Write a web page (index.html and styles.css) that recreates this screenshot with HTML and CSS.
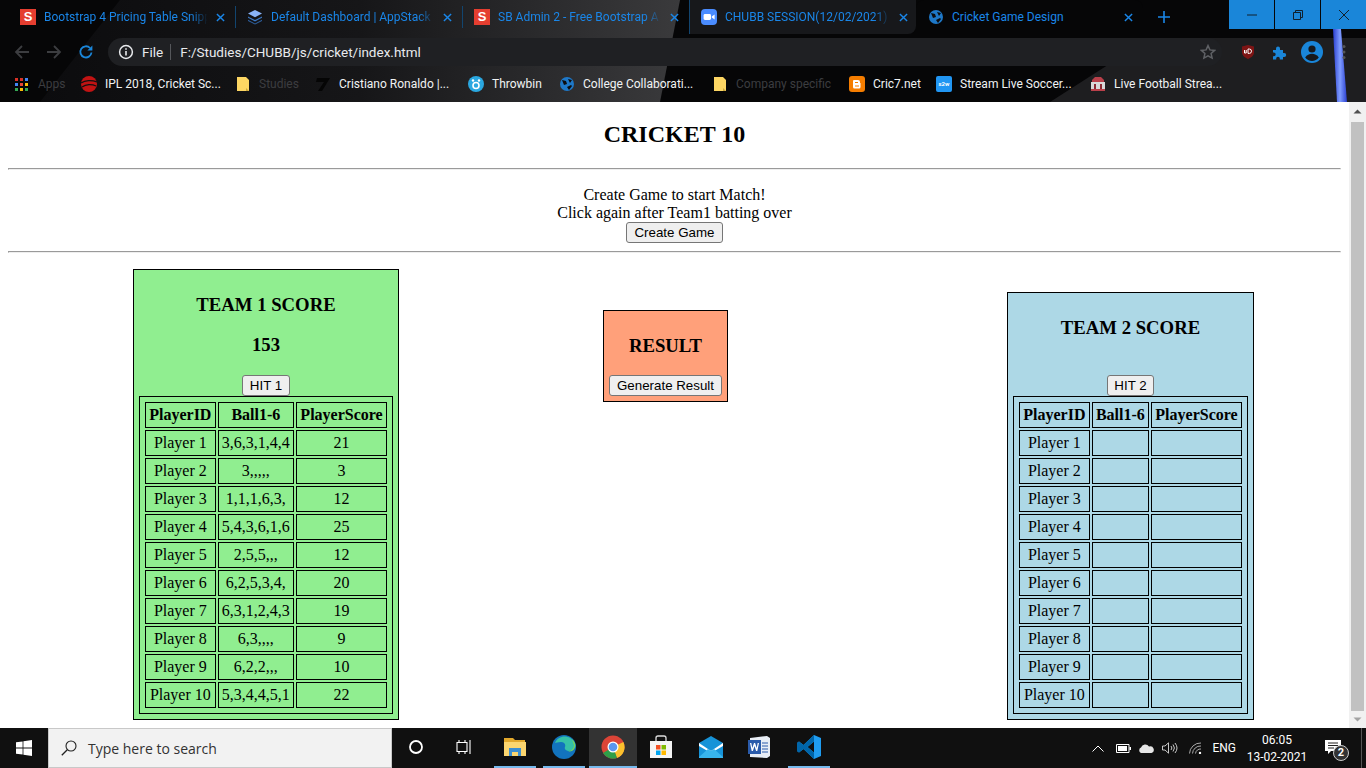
FILE: index.html
```html
<!DOCTYPE html>
<html lang="en">
<head>
    <meta charset="UTF-8">
    <meta name="viewport" content="width=device-width, initial-scale=1.0">
    <title>Cricket Game Design</title>
    <link rel="stylesheet" href="styles.css">
</head>
<body>
    <div class="browser">
        <!-- theme picture behind the tabs -->
        <svg class="theme" viewBox="0 0 1366 102" preserveAspectRatio="none">
            <defs>
                <linearGradient id="sheen" x1="0" x2="1" y1="0" y2="0">
                    <stop offset="0" stop-color="#0c0c0e"/>
                    <stop offset="0.5" stop-color="#161618"/>
                    <stop offset="1" stop-color="#3a3a3c"/>
                </linearGradient>
                <linearGradient id="streak" x1="0" x2="1" y1="0" y2="0">
                    <stop offset="0" stop-color="#2a3fd0"/>
                    <stop offset="0.5" stop-color="#7f9cff"/>
                    <stop offset="1" stop-color="#2a3fd0"/>
                </linearGradient>
            </defs>
            <polygon points="120,0 680,0 660,102 40,102" fill="url(#sheen)"/>
            <polygon points="1050,102 1150,38 1366,38 1366,102" fill="#1e1e20"/>
            <polygon points="1333,29 1341,29 1347,102 1337,102" fill="url(#streak)"/>
        </svg>

        <div class="tabstrip">
            <div class="tab">
                <span class="favicon fav-s">S</span>
                <span class="tab-title">Bootstrap 4 Pricing Table Snipp</span>
                <svg class="tab-close" viewBox="0 0 10 10"><path d="M1 1l8 8M9 1l-8 8"/></svg>
            </div>
            <div class="tab tab-line">
                <svg class="favicon" viewBox="0 0 16 16"><path d="M8 1l7 3.6-7 3.6-7-3.6z" fill="#8ab4f8"/><path d="M1 7.4l7 3.6 7-3.6v1.4l-7 3.6-7-3.6z" fill="#3b78c4"/><path d="M1 10.8l7 3.6 7-3.6v1.2L8 15.6 1 12z" fill="#2d5f9e"/></svg>
                <span class="tab-title">Default Dashboard | AppStack</span>
                <svg class="tab-close" viewBox="0 0 10 10"><path d="M1 1l8 8M9 1l-8 8"/></svg>
            </div>
            <div class="tab tab-line">
                <span class="favicon fav-s">S</span>
                <span class="tab-title">SB Admin 2 - Free Bootstrap A</span>
                <svg class="tab-close" viewBox="0 0 10 10"><path d="M1 1l8 8M9 1l-8 8"/></svg>
            </div>
            <div class="tab tab-line tab-hover">
                <svg class="favicon" viewBox="0 0 16 16"><rect width="16" height="16" rx="4" fill="#4a8cff"/><rect x="2.6" y="5" width="7.4" height="6" rx="1.4" fill="#fff"/><path d="M10.8 7.4l2.8-2v5.2l-2.8-2z" fill="#fff"/></svg>
                <span class="tab-title">CHUBB SESSION(12/02/2021) -</span>
                <svg class="tab-close" viewBox="0 0 10 10"><path d="M1 1l8 8M9 1l-8 8"/></svg>
            </div>
            <div class="tab tab-active">
                <svg class="favicon" viewBox="0 0 16 16"><circle cx="8" cy="8" r="7" fill="#1e78c8"/><path d="M3 4l4 1 1 3-3 1zM9 3l4 1-2 3zM8 11l4-2 1 1-3 4z" fill="#0c0c0e"/></svg>
                <span class="tab-title">Cricket Game Design</span>
                <svg class="tab-close" viewBox="0 0 10 10"><path d="M1 1l8 8M9 1l-8 8"/></svg>
            </div>
            <svg class="new-tab" viewBox="0 0 12 12"><path d="M6 0v12M0 6h12"/></svg>
            <div class="window-btns">
                <div class="window-btn"><svg viewBox="0 0 10 10"><path d="M0 5h10"/></svg></div>
                <div class="window-btn"><svg viewBox="0 0 10 10"><path d="M.5 2.5h7v7h-7zM2.5 2.5v-2h7v7h-2"/></svg></div>
                <div class="window-btn"><svg viewBox="0 0 10 10"><path d="M0 0l10 10M10 0L0 10"/></svg></div>
            </div>
        </div>

        <div class="toolbar">
            <svg class="nav-icon" viewBox="0 0 16 16"><path d="M15 8H2M8 2L2 8l6 6" stroke="#3c3d40"/></svg>
            <svg class="nav-icon" viewBox="0 0 16 16"><path d="M1 8h13M8 2l6 6-6 6" stroke="#3c3d40"/></svg>
            <svg class="nav-icon" viewBox="0 0 16 16"><path d="M13.5 8.5A5.6 5.6 0 1 1 12 4" stroke="#1a86d9"/><path d="M14.4 1.6v5h-5z" fill="#1a86d9"/></svg>
            <div class="omnibox">
                <svg class="info-icon" viewBox="0 0 16 16"><circle cx="8" cy="8" r="6.4" fill="none" stroke="#e8eaed" stroke-width="1.5"/><path d="M7.2 7h1.6v4.6H7.2zM7.2 4.2h1.6v1.6H7.2z" fill="#e8eaed"/></svg>
                <span class="scheme">File</span>
                <span class="url">F:/Studies/CHUBB/js/cricket/index.html</span>
                <svg class="star" viewBox="0 0 16 16"><path d="M8 1.6l1.9 4.3 4.7.5-3.5 3.100 1 4.600L8 11.800l-4.100 2.300 1-4.600L1.400 6.400l4.700-.5z"/></svg>
            </div>
            <div class="ext-icons">
                <svg viewBox="0 0 16 16"><path d="M8 1l6 1.600v6c0 3-3 5.200-6 6.400-3-1.200-6-3.400-6-6.400v-6z" fill="#7d1414"/><path d="M4.500 6v3h1.700V6M8 5v4.400h1.300a2.200 2.200 0 0 0 0-4.400z" fill="none" stroke="#fff" stroke-width="1"/></svg>
                <svg viewBox="0 0 16 16"><path d="M1 6h3V4.500a2 2 0 0 1 4 0V6h3v3h1.200a2 2 0 0 1 0 4H11v2.500H7.800v-1a1.800 1.800 0 0 0-3.600 0v1H1v-3.300h.8a1.900 1.900 0 0 0 0-3.800H1z" fill="#1a86d9"/></svg>
                <svg class="avatar" viewBox="0 0 22 22"><circle cx="11" cy="11" r="11" fill="#1a86d9"/><circle cx="11" cy="8" r="3.600" fill="#17191c"/><path d="M4.200 16.500c1.500-2.600 4.300-3.700 6.800-3.700s5.300 1.100 6.800 3.700A8.800 8.800 0 0 1 11 20a8.800 8.800 0 0 1-6.800-3.500z" fill="#17191c"/></svg>
                <svg class="dots" viewBox="0 0 4 16"><circle cx="2" cy="2.500" r="1.500"/><circle cx="2" cy="8" r="1.500"/><circle cx="2" cy="13.500" r="1.500"/></svg>
            </div>
        </div>

        <div class="bookmarks">
            <div class="bookmark bm-apps">
                <svg viewBox="0 0 13 13"><g fill="#d93025"><rect width="3" height="3"/><rect x="5" width="3" height="3"/></g><rect x="10" width="3" height="3" fill="#4285f4"/><rect y="5" width="3" height="3" fill="#4285f4"/><rect x="5" y="5" width="3" height="3" fill="#ea4335"/><rect x="10" y="5" width="3" height="3" fill="#fbbc04"/><rect y="10" width="3" height="3" fill="#34a853"/><rect x="5" y="10" width="3" height="3" fill="#fbbc04"/><rect x="10" y="10" width="3" height="3" fill="#34a853"/></svg>
                <span class="dim">Apps</span>
            </div>
            <div class="bookmark bm-ipl">
                <svg viewBox="0 0 16 16"><circle cx="8" cy="8" r="8" fill="#c21313"/><path d="M0 7c4-3 11-3 16-1M1 11c4-3 10-3 14-1" stroke="#111" stroke-width="1.300" fill="none"/></svg>
                <span>IPL 2018, Cricket Sc...</span>
            </div>
            <div class="bookmark bm-folder bm-studies">
                <svg viewBox="0 0 12 14"><path d="M0 0h9l3 3v11H0z" fill="#fdd663"/><path d="M9 11v3h3z" fill="#c9a63c"/></svg>
                <span class="dim">Studies</span>
            </div>
            <div class="bookmark bm-seven">
                <svg viewBox="0 0 16 16"><path d="M2 2h13L7 15H3l6-9H1z" fill="#050505"/></svg>
                <span>Cristiano Ronaldo |...</span>
            </div>
            <div class="bookmark bm-throw">
                <svg viewBox="0 0 16 16"><circle cx="8" cy="8" r="8" fill="#2aa7e0"/><circle cx="8" cy="9.500" r="3" fill="none" stroke="#fff" stroke-width="1.600"/><circle cx="5" cy="4.500" r="1.200" fill="#fff"/><circle cx="11" cy="4.500" r="1.200" fill="#fff"/></svg>
                <span>Throwbin</span>
            </div>
            <div class="bookmark bm-college">
                <svg viewBox="0 0 16 16"><circle cx="8" cy="8" r="7" fill="#1e78c8"/><path d="M3 4l4 1 1 3-3 1zM9 3l4 1-2 3zM8 11l4-2 1 1-3 4z" fill="#0c0c0e"/></svg>
                <span>College Collaborati...</span>
            </div>
            <div class="bookmark bm-folder bm-company">
                <svg viewBox="0 0 12 14"><path d="M0 0h9l3 3v11H0z" fill="#fdd663"/><path d="M9 11v3h3z" fill="#c9a63c"/></svg>
                <span class="dim">Company specific</span>
            </div>
            <div class="bookmark bm-blogger">
                <svg viewBox="0 0 16 16"><rect width="16" height="16" rx="3" fill="#f57d00"/><path d="M5 4h4a2 2 0 0 1 2 2v1h.5v4a1.500 1.500 0 0 1-1.500 1.500H5.500A1.500 1.500 0 0 1 4 11V5a1 1 0 0 1 1-1z" fill="#fff"/><path d="M6 6.500h3M6 10h4" stroke="#f57d00" stroke-width="1.200"/></svg>
                <span>Cric7.net</span>
            </div>
            <div class="bookmark bm-s2w">
                <span class="fav-s2w">s2w</span>
                <span>Stream Live Soccer...</span>
            </div>
            <div class="bookmark bm-stadium">
                <svg viewBox="0 0 16 16"><path d="M2 4l3-3h6l3 3v2H2z" fill="#b9404a"/><rect x="1" y="6" width="14" height="7" fill="#d8d8d8"/><path d="M4 8h2v5H4zM10 8h2v5h-2z" fill="#8a2a33"/><rect x="1" y="13" width="14" height="2" fill="#b9404a"/></svg>
                <span>Live Football Strea...</span>
            </div>
        </div>

        <div class="viewport">
            <div class="page">
                <h2 class="title">CRICKET 10</h2>
                <hr>
                <div class="intro">
                    Create Game to start Match!<br>
                    Click again after Team1 batting over<br>
                    <button>Create Game</button>
                </div>
                <hr>
                <div class="board">
                    <div class="box team1">
                        <h3>TEAM 1 SCORE</h3>
                        <h3>153</h3>
                        <button>HIT 1</button>
                        <table>
                            <tr><th>PlayerID</th><th>Ball1-6</th><th>PlayerScore</th></tr>
                            <tr><td>Player 1</td><td>3,6,3,1,4,4</td><td>21</td></tr>
                            <tr><td>Player 2</td><td>3,,,,,</td><td>3</td></tr>
                            <tr><td>Player 3</td><td>1,1,1,6,3,</td><td>12</td></tr>
                            <tr><td>Player 4</td><td>5,4,3,6,1,6</td><td>25</td></tr>
                            <tr><td>Player 5</td><td>2,5,5,,,</td><td>12</td></tr>
                            <tr><td>Player 6</td><td>6,2,5,3,4,</td><td>20</td></tr>
                            <tr><td>Player 7</td><td>6,3,1,2,4,3</td><td>19</td></tr>
                            <tr><td>Player 8</td><td>6,3,,,,</td><td>9</td></tr>
                            <tr><td>Player 9</td><td>6,2,2,,,</td><td>10</td></tr>
                            <tr><td>Player 10</td><td>5,3,4,4,5,1</td><td>22</td></tr>
                        </table>
                    </div>
                    <div class="box result">
                        <h3>RESULT</h3>
                        <button>Generate Result</button>
                    </div>
                    <div class="box team2">
                        <h3>TEAM 2 SCORE</h3>
                        <br>
                        <button>HIT 2</button>
                        <table>
                            <tr><th>PlayerID</th><th>Ball1-6</th><th>PlayerScore</th></tr>
                            <tr><td>Player 1</td><td></td><td></td></tr>
                            <tr><td>Player 2</td><td></td><td></td></tr>
                            <tr><td>Player 3</td><td></td><td></td></tr>
                            <tr><td>Player 4</td><td></td><td></td></tr>
                            <tr><td>Player 5</td><td></td><td></td></tr>
                            <tr><td>Player 6</td><td></td><td></td></tr>
                            <tr><td>Player 7</td><td></td><td></td></tr>
                            <tr><td>Player 8</td><td></td><td></td></tr>
                            <tr><td>Player 9</td><td></td><td></td></tr>
                            <tr><td>Player 10</td><td></td><td></td></tr>
                        </table>
                    </div>
                </div>
            </div>
            <div class="scrollbar">
                <svg viewBox="0 0 17 17"><path d="M8.500 7.500l4 4h-8z" fill="#505050"/></svg>
                <div class="scroll-track"><div class="scroll-thumb"></div></div>
                <svg viewBox="0 0 17 17"><path d="M8.500 10.500l4-4h-8z" fill="#a3a3a3"/></svg>
            </div>
        </div>

        <div class="taskbar">
            <svg class="win-logo" viewBox="0 0 16 16"><path d="M0 2.300l6.600-.9v6.200H0zM7.400 1.300L16 0v7.600H7.400zM0 8.400h6.600v6.200L0 13.700zM7.400 8.400H16V16l-8.600-1.300z" fill="#fff"/></svg>
            <div class="search">
                <svg viewBox="0 0 16 16"><circle cx="10" cy="6" r="5" fill="none" stroke="#222" stroke-width="1.100"/><path d="M6.300 9.700L.8 15.200" stroke="#222" stroke-width="1.300"/></svg>
                <span>Type here to search</span>
            </div>
            <div class="task-icons">
                <div class="task-btn"><svg viewBox="0 0 16 16"><circle cx="8" cy="8" r="6" fill="none" stroke="#fff" stroke-width="1.800"/></svg></div>
                <div class="task-btn"><svg viewBox="0 0 16 16"><path d="M1 3.500h10v9H1zM3 1v2.500M9 1v2.500M3 12.500V15M9 12.500V15M14 1v14" fill="none" stroke="#fff" stroke-width="1.100"/></svg></div>
                <div class="task-btn open"><svg class="big" viewBox="0 0 24 24"><path d="M1 3h9l2 2h10v16H1z" fill="#e3a92c"/><path d="M1 7h22v14H1z" fill="#fcd66f"/><path d="M6 13h12v8h-3v-4H9v4H6z" fill="#3d8fd1"/></svg></div>
                <div class="task-btn open"><svg class="big" viewBox="0 0 24 24"><circle cx="12" cy="12" r="12" fill="#1273bd"/><path d="M3 8C6 0 18-1 23 8c2 5-2 8-6 8-3 0-5-2-4-4 1-3-1-5-4-5-3 0-5 1-6 1z" fill="#35c1a8"/><path d="M20 4c3 3 4 7 2 10-1 2-4 3-6 2 3 0 6-2 6-6z" fill="#7fd653"/></svg></div>
                <div class="task-btn active"><svg class="big" viewBox="0 0 24 24"><circle cx="12" cy="12" r="11.500" fill="#db4437"/><path d="M12 12L22.400 7a11.500 11.500 0 0 1-6.500 16z" fill="#fbc02d"/><path d="M12 12l4 11A11.500 11.500 0 0 1 2 18z" fill="#2e9e48"/><circle cx="12" cy="12" r="5.500" fill="#fff"/><circle cx="12" cy="12" r="4.300" fill="#5a96ee"/></svg></div>
                <div class="task-btn"><svg class="big" viewBox="0 0 24 24"><path d="M7 6V3a2 2 0 0 1 2-2h6a2 2 0 0 1 2 2v3" fill="none" stroke="#ddd" stroke-width="1.300"/><path d="M1 6h22v17H1z" fill="#f4f4f4"/><rect x="7" y="10" width="4.500" height="4.500" fill="#f25022"/><rect x="12.500" y="10" width="4.500" height="4.500" fill="#7fba00"/><rect x="7" y="15.500" width="4.500" height="4.500" fill="#00a4ef"/><rect x="12.500" y="15.500" width="4.500" height="4.500" fill="#ffb900"/></svg></div>
                <div class="task-btn"><svg class="big" viewBox="0 0 24 24"><path d="M0 8l12-7 12 7v15H0z" fill="#1793d8"/><path d="M0 8l12 8 12-8v3l-12 7-12-7z" fill="#fff"/><path d="M0 22l9-8 3 2 3-2 9 8v1H0z" fill="#38b4ec"/></svg></div>
                <div class="task-btn"><svg class="big" viewBox="0 0 24 24"><path d="M3 3l17-2 3 2v18l-3 2-17-1z" fill="#e8edf5"/><rect x="1" y="5" width="13" height="14" fill="#2a5bab"/><path d="M3 8l1.700 8h1.200L7.500 11l1.600 5h1.200L12 8h-1.300l-1 5-1.600-5H7l-1.700 5-1-5z" fill="#fff"/><path d="M15 8h6M15 11h6M15 14h6M15 17h6" stroke="#2a5bab"/></svg></div>
                <div class="task-btn open"><svg class="big" viewBox="0 0 24 24"><path d="M17 0l7 3v18l-7 3L6.500 14 2 17.500 0 16v-8l2-1.500L6.500 10zM17 6.500L10.500 12l6.500 5.500z" fill="#1f9cf0"/><path d="M17 0L6.500 10 2 6.500 0 8v8l2 1.500 4.500-3.500L17 24V17.500L10.500 12 17 6.500z" fill="#0065a9"/></svg></div>
            </div>
            <div class="tray">
                <svg class="t-caret" viewBox="0 0 12 7"><path d="M.5 6.500L6 1l5.500 5.500" fill="none" stroke="#fff"/></svg>
                <svg class="t-batt" viewBox="0 0 15 9"><path d="M.5.500h12.500v8H.5z" fill="none" stroke="#fff"/><rect x="2" y="2" width="9" height="5" fill="#fff"/><rect x="13.500" y="3" width="1.500" height="3" fill="#fff"/></svg>
                <svg class="t-cloud" viewBox="0 0 16 9"><path d="M3 9a3 3 0 0 1 0-5.500A4.500 4.500 0 0 1 11 2.500 3.300 3.300 0 0 1 13.500 9z" fill="#e6e6e6"/></svg>
                <svg class="t-sound" viewBox="0 0 16 12"><path d="M.5 4h2.500L6.500.8v10.400L3 8H.5z M9 4a3 3 0 0 1 0 4M11 2.500a5.500 5.500 0 0 1 0 7M13 1a8 8 0 0 1 0 10" fill="none" stroke="#ddd" stroke-width=".9"/></svg>
                <svg class="t-wifi" viewBox="0 0 14 12"><path d="M.5 11.500A11 11 0 0 1 12 1M3.500 11.500A8 8 0 0 1 12 4M6.500 11.500A5 5 0 0 1 12 7" fill="none" stroke="#bbb" stroke-width=".9"/><circle cx="11" cy="11" r="1.200" fill="#fff"/></svg>
                <span class="lang">ENG</span>
                <div class="clock"><span>06:05</span><span>13-02-2021</span></div>
                <div class="notify">
                    <svg viewBox="0 0 16 15"><path d="M0 0h16v11H6l-3 3v-3H0z" fill="#fff"/><path d="M3 3h10M3 5.500h10M3 8h6" stroke="#222"/></svg>
                    <span class="badge">2</span>
                </div>
                <div class="show-desktop"></div>
            </div>
        </div>
    </div>
</body>
</html>
```

FILE: styles.css
```css
html, body {
    margin: 0;
    padding: 0;
    height: 100%;
    overflow: hidden;
}
body {
    font-family: "Liberation Serif", serif;
    font-size: 16px;
    background-color: #fff;
}
.browser {
    position: relative;
    display: flex;
    flex-direction: column;
    height: 768px;
}
.theme {
    position: absolute; /* lies behind the tabs and bars */
    top: 0;
    left: 0;
    width: 1366px;
    height: 102px;
    background-color: #060607;
}

/* tabs */
.tabstrip {
    position: relative;
    display: flex;
    height: 38px;
    padding-left: 8px;
    font-family: Roboto, sans-serif;
    font-size: 12px;
    color: #1a86e8;
}
.tab {
    display: flex;
    align-items: center;
    box-sizing: border-box;
    width: 227px;
    height: 34px;
    padding: 0 10px 0 11px;
    border-left: 1px solid transparent;
}
.tab-line {
    border-left-color: #12456f;
    height: 22px;
    margin-top: 6px;
}
.tab-hover {
    background-color: #17181b;
    height: 34px;
    margin-top: 0;
    border-radius: 0 0 8px 0;
    background-clip: padding-box;
}
.tab-active {
    background-color: #060607;
    border-radius: 8px 8px 0 0;
}
.favicon {
    flex: none;
    width: 16px;
    height: 16px;
    margin-right: 8px;
}
.fav-s {
    background-color: #e53e30;
    color: #fff;
    font-family: "Liberation Sans", sans-serif;
    font-size: 13px;
    font-weight: bold;
    line-height: 16px;
    text-align: center;
}
.tab-title {
    flex: 1;
    white-space: nowrap;
    -webkit-mask-image: linear-gradient(to right, #000 88%, transparent 98%);
    mask-image: linear-gradient(to right, #000 88%, transparent 98%);
}
.tab-active .tab-title {
    -webkit-mask-image: none;
    mask-image: none;
}
.tab-close {
    flex: none;
    width: 9px;
    height: 9px;
    margin-left: 5px;
    fill: none;
    stroke: #1a86e8;
    stroke-width: 1.6;
}
.new-tab {
    width: 12px;
    height: 12px;
    margin: 11px 0 0 15px;
    fill: none;
    stroke: #1a86e8;
    stroke-width: 1.6;
}
.window-btns {
    position: absolute;
    top: 0;
    right: 0;
    display: flex;
    gap: 1px;
}
.window-btn {
    display: flex;
    align-items: center;
    justify-content: center;
    width: 45px;
    height: 29px;
    background-color: #1a86d9;
}
.window-btn svg {
    width: 10px;
    height: 10px;
    fill: none;
    stroke: #10202c;
    stroke-width: 1;
}

/* address bar */
.toolbar {
    position: relative;
    display: flex;
    align-items: center;
    height: 28px;
    padding-left: 14px;
}
.nav-icon {
    width: 16px;
    height: 16px;
    margin-right: 16px;
    fill: none;
    stroke-width: 1.8;
}
.omnibox {
    display: flex;
    align-items: center;
    box-sizing: border-box;
    width: 1114px;
    height: 28px;
    margin-left: -2px;
    padding: 0 6px 0 10px;
    border-radius: 14px;
    background-color: #1f2023;
    font-family: Roboto, sans-serif;
    font-size: 13.5px;
    color: #e8eaed;
}
.info-icon {
    width: 16px;
    height: 16px;
    margin-right: 8px;
}
.scheme {
    padding-right: 7px;
    border-right: 1px solid #55575b;
    line-height: 16px;
}
.url {
    flex: 1;
    padding-left: 9px;
}
.star {
    width: 16px;
    height: 16px;
    fill: none;
    stroke: #5f6165;
    stroke-width: 1.5;
}
.ext-icons {
    display: flex;
    align-items: center;
    margin-left: 18px;
}
.ext-icons svg {
    width: 16px;
    height: 16px;
    margin-right: 16px;
}
.ext-icons .avatar {
    width: 22px;
    height: 22px;
    margin: 0 19px 0 -3px;
}
.ext-icons .dots {
    width: 4px;
    margin: 0;
    fill: #555;
}

/* bookmarks bar */
.bookmarks {
    position: relative;
    display: flex;
    align-items: center;
    height: 36px;
    padding-left: 15px;
    font-family: Roboto, sans-serif;
    font-size: 12px;
    color: #f1f3f4;
    white-space: nowrap;
}
.bookmark {
    display: flex;
    flex: none;
    align-items: center;
}
.bm-apps { width: 66px; }
.bm-ipl { width: 156px; }
.bm-studies { width: 78px; }
.bm-seven { width: 153px; }
.bm-throw { width: 91px; }
.bm-college { width: 155px; }
.bm-company { width: 135px; }
.bm-blogger { width: 87px; }
.bm-s2w { width: 154px; }
.bookmark svg, .fav-s2w {
    flex: none;
    width: 16px;
    height: 16px;
    margin-right: 8px;
}
.bookmark.bm-apps svg {
    width: 13px;
    height: 13px;
    margin-right: 10px;
}
.bookmark.bm-folder svg {
    width: 12px;
    height: 14px;
    margin-right: 10px;
}
.dim {
    color: #3c3d40;
}
.fav-s2w {
    border-radius: 2px;
    background-color: #2196f3;
    color: #fff;
    font-size: 6px;
    font-weight: bold;
    line-height: 16px;
    text-align: center;
}

/* the page itself */
.viewport {
    position: relative;
    display: flex;
    height: 626px;
    background-color: #fff;
}
.page {
    flex: 1;
    box-sizing: border-box;
    padding: 8px;
    overflow: hidden;
}
.title {
    margin: 11px 0 20px;
    font-size: 24px;
    text-align: center;
}
hr {
    margin: 0;
    border: 1px solid;
    border-color: #9a9a9a #eee #eee #9a9a9a;
}
.intro {
    margin: 16px 0 8px;
    text-align: center;
    line-height: 18px;
}
button {
    box-sizing: border-box;
    height: 21px;
    padding: 1px 7.5px;
    border: 1px solid #767676;
    border-radius: 3px;
    background-color: #efefef;
    font-family: "Liberation Sans", sans-serif;
    font-size: 13.33px;
    color: #000;
    white-space: nowrap;
}
.box button {
    padding: 1px 6.5px;
}
.board {
    display: flex;
    align-items: flex-start;
    padding-left: 125px;
}
.box {
    flex: none;
    box-sizing: border-box;
    padding: 5px;
    border: 1px solid #000;
    text-align: center;
}
.box h3 {
    margin: 18.72px 0;
    font-size: 18.72px;
}
.team1 {
    width: 266px;
    margin-top: 16px;
    background-color: #90ee90;
}
.result {
    width: 125px;
    margin: 57px 0 0 204px;
    background-color: #ffa07a;
}
.team2 {
    width: 247px;
    margin: 39px 0 0 279px;
    background-color: #add8e6;
}
table {
    width: 100%;
    padding: 3px;
    border: 1px solid #000;
    border-spacing: 2px;
}
th, td {
    height: 18px;
    padding: 3px;
    border: 1px solid #000;
}

/* scrollbar */
.scrollbar {
    display: flex;
    flex: none;
    flex-direction: column;
    width: 17px;
    background-color: #f1f1f1;
}
.scrollbar svg {
    flex: none;
    width: 17px;
    height: 17px;
}
.scroll-track {
    flex: 1;
}
.scroll-thumb {
    height: 589px;
    margin: 3px 2px 0;
    background-color: #c1c1c1;
}

/* windows taskbar */
.taskbar {
    position: relative;
    display: flex;
    align-items: center;
    height: 40px;
    background-color: #101010;
}
.win-logo {
    width: 16px;
    height: 16px;
    margin: 0 16px;
}
.search {
    display: flex;
    align-items: center;
    box-sizing: border-box;
    width: 344px;
    height: 40px;
    padding-left: 12px;
    border: 1px solid #c8c8c8;
    background-color: #f2f2f2;
    font-family: "Open Sans", sans-serif;
    font-size: 14px;
    color: #333;
}
.search svg {
    width: 16px;
    height: 16px;
    margin-right: 11px;
}
.task-icons {
    display: flex;
}
.task-btn {
    display: flex;
    align-items: center;
    justify-content: center;
    box-sizing: border-box;
    width: 48px;
    height: 40px;
    border-bottom: 2px solid transparent;
}
.task-btn:nth-child(3) { margin-left: 3px; }
.task-btn:nth-child(4), .task-btn:nth-child(5) { margin-left: 1px; }
.task-btn:nth-child(7), .task-btn:nth-child(9) { margin-left: 2px; }
.task-btn svg {
    width: 16px;
    height: 16px;
}
.task-btn svg.big {
    width: 24px;
    height: 24px;
}
.task-btn.open {
    border-image: linear-gradient(to right, transparent 8%, #76b9ed 8%, #76b9ed 92%, transparent 92%) 1;
}
.task-btn.active {
    background-color: #333;
    border-bottom-color: #76b9ed;
}
.tray {
    display: flex;
    align-items: center;
    margin-left: auto;
    color: #fff;
    font-family: Roboto, sans-serif;
    font-size: 12px;
}
.t-caret {
    width: 12px;
    height: 7px;
    margin-right: 12px;
}
.t-batt {
    width: 15px;
    height: 9px;
    margin-right: 7px;
}
.t-cloud {
    width: 16px;
    height: 9px;
    margin-right: 8px;
}
.t-sound {
    width: 16px;
    height: 12px;
    margin-right: 11px;
}
.t-wifi {
    width: 14px;
    height: 12px;
    margin-right: 9px;
}
.clock {
    display: flex;
    flex-direction: column;
    align-items: center;
    gap: 3px;
    width: 66px;
    margin-left: 8px;
}
.notify {
    position: relative;
    width: 48px;
    height: 24px;
}
.notify svg {
    position: absolute;
    top: 4px;
    left: 15px;
    width: 16px;
    height: 15px;
}
.badge {
    position: absolute; /* count over the notification icon */
    top: 9px;
    left: 23px;
    width: 14px;
    height: 14px;
    border: 1px solid #ccc;
    border-radius: 50%;
    background-color: #333;
    font-size: 11px;
    font-weight: bold;
    line-height: 14px;
    text-align: center;
}
.show-desktop {
    width: 1px;
    height: 40px;
    margin: 0 4px 0 3px;
    background-color: #555;
}
```
